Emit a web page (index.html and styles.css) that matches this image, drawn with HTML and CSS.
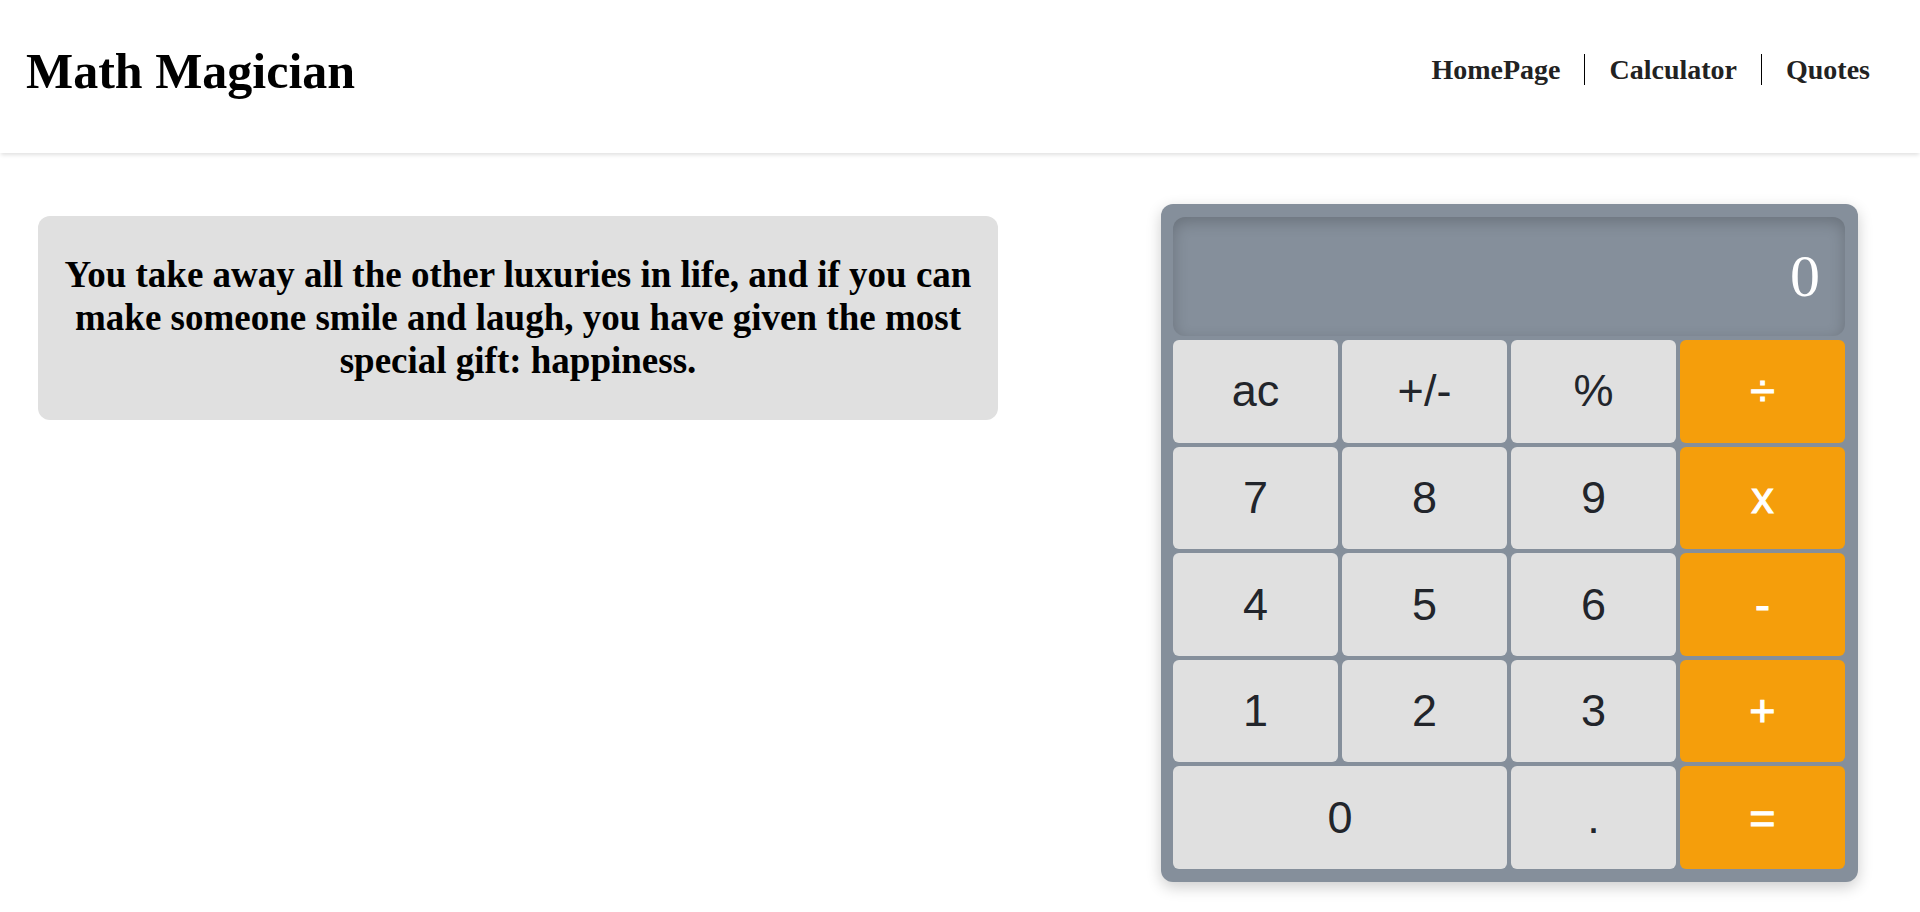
FILE: index.html
```html
<!DOCTYPE html>
<html lang="en">
<head>
  <meta charset="utf-8">
  <meta name="viewport" content="width=device-width, initial-scale=1">
  <title>Math Magician</title>
  <link rel="stylesheet" href="styles.css">
</head>
<body>
  <header class="header">
    <h1 class="title">Math Magician</h1>
    <nav class="nav">
      <a class="nav-link" href="#home">HomePage</a>
      <a class="nav-link" href="#calculator">Calculator</a>
      <a class="nav-link" href="#quotes">Quotes</a>
    </nav>
  </header>
  <main class="main">
    <section class="quote">
      <h2 class="quote-text">You take away all the other luxuries in life, and if you can make someone smile and laugh, you have given the most special gift: happiness.</h2>
    </section>
    <section class="calculator" aria-label="Calculator">
      <output class="display">0</output>
      <button type="button" class="key">ac</button>
      <button type="button" class="key">+/-</button>
      <button type="button" class="key">%</button>
      <button type="button" class="key operator">÷</button>
      <button type="button" class="key">7</button>
      <button type="button" class="key">8</button>
      <button type="button" class="key">9</button>
      <button type="button" class="key operator">x</button>
      <button type="button" class="key">4</button>
      <button type="button" class="key">5</button>
      <button type="button" class="key">6</button>
      <button type="button" class="key operator">-</button>
      <button type="button" class="key">1</button>
      <button type="button" class="key">2</button>
      <button type="button" class="key">3</button>
      <button type="button" class="key operator">+</button>
      <button type="button" class="key zero">0</button>
      <button type="button" class="key">.</button>
      <button type="button" class="key operator">=</button>
    </section>
  </main>
</body>
</html>
```

FILE: styles.css
```css
body {
  margin: 0;
  background: #fff;
  color: #000;
  font-family: "Liberation Serif", "Times New Roman", serif;
}

.header {
  display: flex;
  justify-content: space-between;
  align-items: flex-start;
  padding: 43px 26px 53px;
  box-shadow: 0 3px 4px -1px rgba(0, 0, 0, 0.12);
}

.title {
  margin: 0;
  font-size: 50px;
  line-height: 57px;
}

.nav {
  display: flex;
  padding-top: 11px;
}

.nav-link {
  padding: 0 24px;
  color: #222;
  font-size: 28px;
  font-weight: bold;
  line-height: 31px;
  text-decoration: none;
}

.nav-link + .nav-link {
  border-left: 1px solid #000;
}

.main {
  display: flex;
  justify-content: space-between;
  align-items: flex-start;
  padding: 51px 62px 30px 38px;
}

.quote {
  box-sizing: border-box;
  width: 50vw;
  margin-top: 12px;
  padding: 37px 20px 38px;
  border-radius: 12px;
  background: #e0e0e0;
  text-align: center;
}

.quote-text {
  margin: 0;
  font-size: 37px;
  line-height: 43px;
}

.calculator {
  display: grid;
  grid-template-columns: repeat(4, 1fr);
  grid-template-rows: auto repeat(5, 1fr);
  gap: 4px;
  width: 35vw;
  min-height: 652px;
  padding: 13px 13px 13px 12px;
  border-radius: 12px;
  background: #858f9b;
  box-shadow: 0 5px 15px rgba(0, 0, 0, 0.2);
}

.display {
  grid-column: 1 / -1;
  padding: 25px;
  border-radius: 12px;
  box-shadow: inset 0 5px 15px rgba(0, 0, 0, 0.2);
  color: #fff;
  font-size: 60px;
  line-height: 69px;
  text-align: right;
}

.key {
  padding: 0;
  border: 0;
  border-radius: 6px;
  background: #e0e0e0;
  color: #22252b;
  font-family: "Liberation Sans", Arial, sans-serif;
  font-size: 45px;
}

.operator {
  background: #f59e0b;
  color: #fff;
  -webkit-text-stroke: 1px #fff;
}

.zero {
  grid-column: span 2;
}
```
